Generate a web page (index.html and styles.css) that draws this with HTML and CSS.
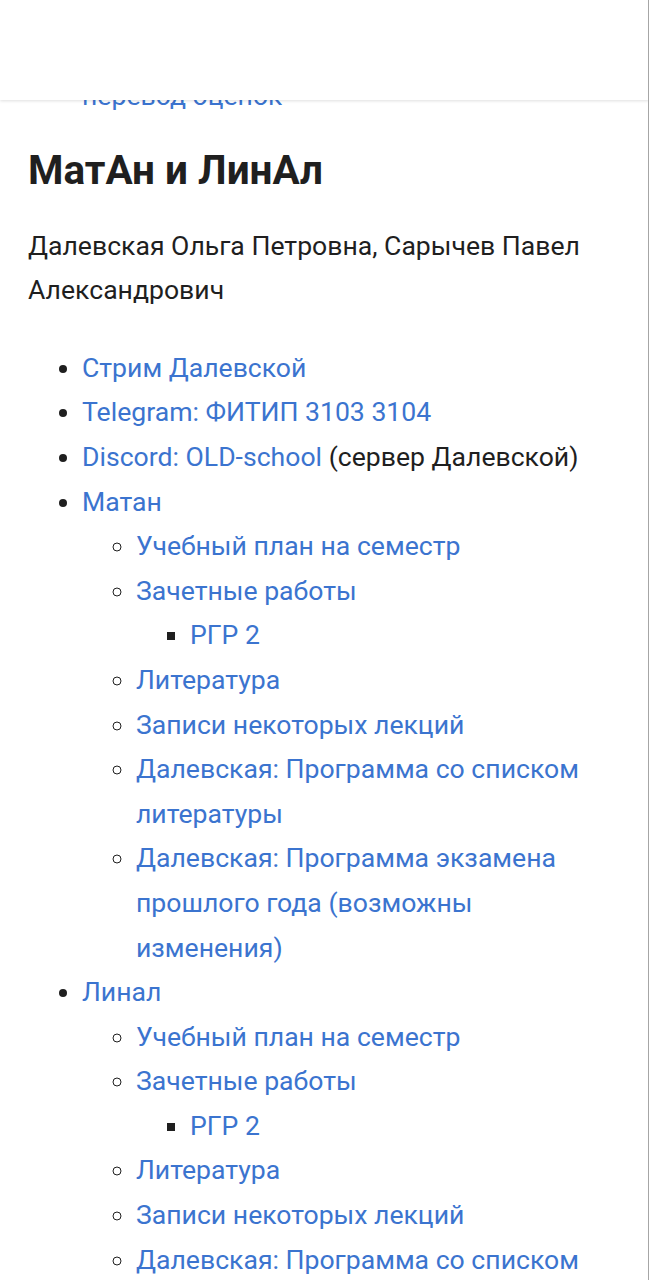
FILE: index.html
```html
<!DOCTYPE html>
<html lang="ru">
<head>
<meta charset="utf-8">
<title>МатАн и ЛинАл</title>
<link rel="stylesheet" href="styles.css">
</head>
<body>
<header class="topbar"></header>
<div class="scrollbar"></div>
<main class="content">
  <ul class="list prev">
    <li class="cont"><a href="#">перевод оценок</a></li>
  </ul>
  <h2 class="title">МатАн и ЛинАл</h2>
  <p class="lead">Далевская Ольга Петровна, Сарычев Павел Александрович</p>
  <ul class="list">
    <li><a href="#">Стрим Далевской</a></li>
    <li><a href="#">Telegram: ФИТИП 3103 3104</a></li>
    <li><a href="#">Discord: OLD-school</a> (сервер Далевской)</li>
    <li><a href="#">Матан</a>
      <ul class="list sub">
        <li><a href="#">Учебный план на семестр</a></li>
        <li><a href="#">Зачетные работы</a>
          <ul class="list subsub">
            <li><a href="#">РГР 2</a></li>
          </ul>
        </li>
        <li><a href="#">Литература</a></li>
        <li><a href="#">Записи некоторых лекций</a></li>
        <li><a href="#">Далевская: Программа со списком литературы</a></li>
        <li><a href="#">Далевская: Программа экзамена прошлого года (возможны изменения)</a></li>
      </ul>
    </li>
    <li><a href="#">Линал</a>
      <ul class="list sub">
        <li><a href="#">Учебный план на семестр</a></li>
        <li><a href="#">Зачетные работы</a>
          <ul class="list subsub">
            <li><a href="#">РГР 2</a></li>
          </ul>
        </li>
        <li><a href="#">Литература</a></li>
        <li><a href="#">Записи некоторых лекций</a></li>
        <li><a href="#">Далевская: Программа со списком литературы</a></li>
        <li><a href="#">Далевская: Программа экзамена прошлого года (возможны изменения)</a></li>
      </ul>
    </li>
  </ul>
</main>
</body>
</html>
```

FILE: styles.css
```css
html, body {
  margin: 0;
  padding: 0;
  background: #ffffff;
}

body {
  font-family: Roboto, "Noto Sans", sans-serif;
  font-size: 26.6px;
  line-height: 44.6px;
  color: #1f1f1f;
}

.topbar {
  position: fixed;
  top: 0;
  left: 0;
  right: 0;
  height: 100px;
  background: #ffffff;
  box-shadow: 0 1px 3px rgba(0, 0, 0, 0.13);
  z-index: 10;
}

.scrollbar {
  position: fixed;
  top: 0;
  right: 0;
  width: 1px;
  height: 100%;
  background: #a6a6a6;
  z-index: 11;
}

.content {
  padding: 74px 28px 40px 28px;
}

a {
  color: #3b74cf;
  text-decoration: none;
}

.list {
  margin: 0;
  padding-left: 54px;
  list-style: disc;
}

.list.sub {
  list-style: circle;
}

.list.subsub {
  list-style: square;
}

.cont {
  list-style: none;
}

.title {
  font-family: Roboto, "Noto Sans", sans-serif;
  font-size: 40.5px;
  line-height: 48px;
  font-weight: 700;
  color: #1f1f1f;
  margin: 27px 0 30px 0;
}

.lead {
  margin: 0 0 33px 0;
}
```
